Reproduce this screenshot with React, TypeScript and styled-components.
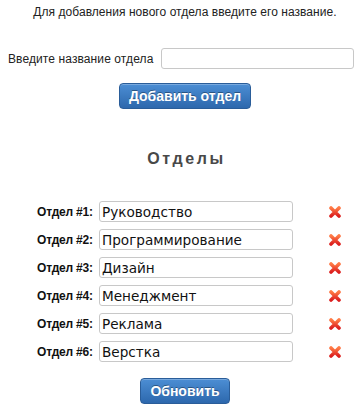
import { useState } from 'react'
import styled, { createGlobalStyle } from 'styled-components'

const GlobalStyle = createGlobalStyle`
    body {
        margin: 0;
        background: #fff;
        font-family: "Liberation Sans", Arial, sans-serif;
        color: #222;
    }
`

const Page = styled.div`
    width: 361px;
    padding-bottom: 6px;
`

const Centered = styled.div<{ $top: number }>`
    padding-left: 9px;
    margin-top: ${(p) => p.$top}px;
    text-align: center;
`

const Intro = styled.p`
    margin: 5px 0 0;
    padding-left: 9px;
    text-align: center;
    font-size: 12px;
    line-height: 14px;
    letter-spacing: 0.05px;
`

const AddRow = styled.label`
    display: flex;
    align-items: center;
    gap: 8px;
    margin-top: 29px;
    padding-left: 8px;
    font-size: 12px;
    letter-spacing: 0.1px;
`

const TextInput = styled.input<{ $width: number }>`
    box-sizing: border-box;
    width: ${(p) => p.$width}px;
    height: 21px;
    padding: 0 2px;
    border: 1px solid #c8c8c8;
    border-radius: 3px;
    font-family: "DejaVu Sans", Verdana, sans-serif;
    font-size: 13.6px;
    color: #111;
    outline: none;
`

const BlueButton = styled.button`
    height: 26px;
    padding: 0 9px;
    border: 1px solid #2a5d99;
    border-radius: 4px;
    background: linear-gradient(#4c8ed4, #2d68ad);
    box-shadow: inset 0 1px 0 rgba(255, 255, 255, 0.25);
    color: #fff;
    font-family: "Liberation Sans", Arial, sans-serif;
    font-size: 14px;
    font-weight: bold;
    text-shadow: 0 -1px 0 rgba(0, 0, 0, 0.35);
    cursor: pointer;
`

const Heading = styled.h2`
    margin: 40px 0 0;
    padding-left: 12px;
    text-align: center;
    font-size: 16px;
    line-height: 20px;
    letter-spacing: 2.6px;
    color: #484848;
`

const List = styled.div`
    display: flex;
    flex-direction: column;
    gap: 7px;
    margin-top: 32px;
    padding-left: 37px;
`

const Row = styled.div`
    display: flex;
    align-items: center;
    height: 21px;
`

const RowLabel = styled.label`
    width: 56px;
    margin-right: 6px;
    font-size: 12px;
    font-weight: bold;
    letter-spacing: -0.2px;
    color: #111;
    white-space: nowrap;
`

const DeleteButton = styled.button`
    display: flex;
    align-items: center;
    justify-content: center;
    width: 14px;
    height: 14px;
    margin-left: 35px;
    padding: 0;
    border: 0;
    background: none;
    cursor: pointer;
`

function DeleteIcon() {
    return (
        <svg width="12" height="12" viewBox="0 0 12 12">
            <defs>
                <linearGradient id="xg" x1="0" y1="0" x2="0" y2="1">
                    <stop offset="0" stopColor="#ff7a45" />
                    <stop offset="1" stopColor="#dc1f1f" />
                </linearGradient>
            </defs>
            <path
                d="M2 2 L10 10 M10 2 L2 10"
                stroke="url(#xg)"
                strokeWidth="3.6"
                strokeLinecap="round"
                fill="none"
            />
        </svg>
    )
}

const initial = ['Руководство', 'Программирование', 'Дизайн', 'Менеджмент', 'Реклама', 'Верстка']

function App() {
    const [name, setName] = useState('')
    const [departments, setDepartments] = useState(initial)

    const updateDep = (i: number, value: string) => {
        setDepartments(departments.map((d, idx) => (idx === i ? value : d)))
    }

    return (
        <Page>
            <GlobalStyle />
            <Intro>Для добавления нового отдела введите его название.</Intro>
            <AddRow>
                Введите название отдела
                <TextInput $width={193} value={name} onChange={(e) => setName(e.target.value)} />
            </AddRow>
            <Centered $top={14}>
                <BlueButton
                    onClick={() => {
                        if (name) {
                            setDepartments([...departments, name])
                            setName('')
                        }
                    }}
                >
                    Добавить отдел
                </BlueButton>
            </Centered>
            <Heading>Отделы</Heading>
            <List>
                {departments.map((d, i) => (
                    <Row key={i}>
                        <RowLabel>Отдел #{i + 1}:</RowLabel>
                        <TextInput $width={194} value={d} onChange={(e) => updateDep(i, e.target.value)} />
                        <DeleteButton onClick={() => setDepartments(departments.filter((_, idx) => idx !== i))}>
                            <DeleteIcon />
                        </DeleteButton>
                    </Row>
                ))}
            </List>
            <Centered $top={16}>
                <BlueButton>Обновить</BlueButton>
            </Centered>
        </Page>
    )
}

export default App
